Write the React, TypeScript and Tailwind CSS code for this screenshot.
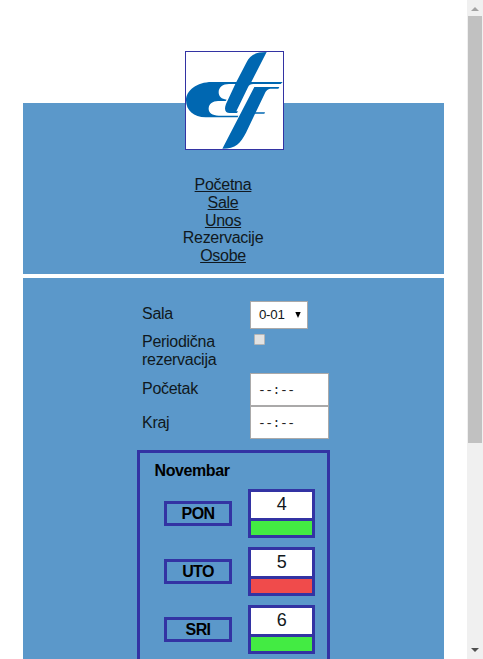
const days = [
  { name: "PON", date: 4, free: true },
  { name: "UTO", date: 5, free: false },
  { name: "SRI", date: 6, free: true },
];

function Logo() {
  return (
    <svg className="block h-[99px] w-[99px] border border-[#3333a3] bg-white" viewBox="33 36 291 291">
      <g fill="#0067b1">
        <path d="M275 36 C240 36 225 46 214 68 L184 126 L110 126 C66 126 33 151 33 181 C33 211 56 232 92 232 L188 232 L190 227 L131 227 C111 227 100 218 101 205 C102 192 113 183 129 183 L152 183 L155 179 C139 178 131 169 131 157 C131 142 143 132 162 132 L181 132 L153 192 C146 210 152 219 164 219 L186 219 L189 214 L184 214 L219 142 Q223 132 235 132 L317 132 L323 126 L229 126 Z" />
        <path d="M238 141 L313 141 L310 146 L290 146 C278 146 274 151 269 161 L213 278 C196 311 183 325 142 326 Z" />
        <path d="M236 216 H270 L268 222 H233 Z" opacity=".75" />
      </g>
    </svg>
  );
}

function TimeField() {
  return (
    <div className="flex h-[33px] w-[79px] items-center border border-[#aaa9a9] bg-white pt-[2px] pl-[7px] font-['Liberation_Mono',monospace] text-[13px] tracking-[-0.5px] whitespace-pre text-[#222]">
      --:--
    </div>
  );
}

function Scrollbar() {
  return (
    <div className="flex h-full w-[16px] flex-col items-center justify-between bg-[#f0f0f0]">
      <div className="flex flex-col items-center">
        <svg className="h-4 w-4" viewBox="0 0 16 16">
          <path d="M4 11 L8 7 L12 11Z" fill="#a3a3a3" />
        </svg>
        <div className="h-[427px] w-[14px] bg-[#c1c1c1]" />
      </div>
      <svg className="h-4 w-4" viewBox="0 0 16 16">
        <path d="M4 5 L8 9 L12 5Z" fill="#505050" />
      </svg>
    </div>
  );
}

export default function App() {
  return (
    <div className="flex h-[659px] w-[483px] justify-between overflow-hidden bg-white pl-[23px] font-['Liberation_Sans',Arial,sans-serif] text-[16px] leading-[17.8px] tracking-[-0.28px] text-[#101820]">
      <div className="w-[420.5px] shrink-0 pt-[102.5px]">
        <header className="flex h-[171.5px] flex-col bg-[#5b98ca] pl-[162px]">
          <div className="-mt-[51.5px]">
            <Logo />
          </div>
          <nav className="mt-[26px] flex w-[76px] flex-col items-center">
            <a className="underline">Početna</a>
            <a className="underline">Sale</a>
            <a className="underline">Unos</a>
            <span>Rezervacije</span>
            <a className="underline">Osobe</a>
          </nav>
        </header>
        <main className="mt-1 h-[700px] bg-[#5b98ca] pt-[23px] pl-[114px]">
          <div className="grid grid-cols-[108px_79px] pl-[5px]">
            <div className="h-[32px] pt-[4px]">Sala</div>
            <div className="flex h-[28px] w-[58px] items-center justify-between border border-[#aaa9a9] bg-white pr-[6px] pl-[8px] text-[13.3px]">
              <span>0-01</span>
              <svg className="h-[6px] w-[6px]" viewBox="0 0 6 6">
                <path d="M0.3 0 H5.7 L3 6Z" fill="#000" />
              </svg>
            </div>
            <div className="h-[40px]">
              Periodična
              <br />
              rezervacija
            </div>
            <div className="pt-[1px] pl-[4px]">
              <div className="h-[11px] w-[11px] rounded-[1px] border border-[#b5b5b5] bg-[#e2e2e2]" />
            </div>
            <div className="h-[33px] pt-[7px]">Početak</div>
            <TimeField />
            <div className="h-[33px] pt-[7.5px]">Kraj</div>
            <TimeField />
          </div>
          <section className="mt-[11px] h-[500px] w-[193px] border-[3px] border-[#3333a3] pt-[9px]">
            <h2 className="pl-[14.5px] font-bold tracking-[-0.4px] text-black">Novembar</h2>
            <div className="mt-[9.5px] flex flex-col gap-[9.5px] pl-[24px]">
              {days.map((day) => (
                <div key={day.name} className="flex h-[48.5px] items-center gap-[16px]">
                  <div className="flex h-[24.5px] w-[68px] items-center justify-center border-[3px] border-[#3333a3] font-bold tracking-[-0.6px] text-black">
                    {day.name}
                  </div>
                  <div className="flex h-[49px] w-[67px] flex-col border-[3px] border-[#3333a3]">
                    <div className="flex h-[29px] items-center justify-center border-b-[3px] border-[#3333a3] bg-white text-[18px]">
                      {day.date}
                    </div>
                    <div className={day.free ? "flex-1 bg-[#43eb43]" : "flex-1 bg-[#f04b4b]"} />
                  </div>
                </div>
              ))}
            </div>
          </section>
        </main>
      </div>
      <Scrollbar />
    </div>
  );
}
